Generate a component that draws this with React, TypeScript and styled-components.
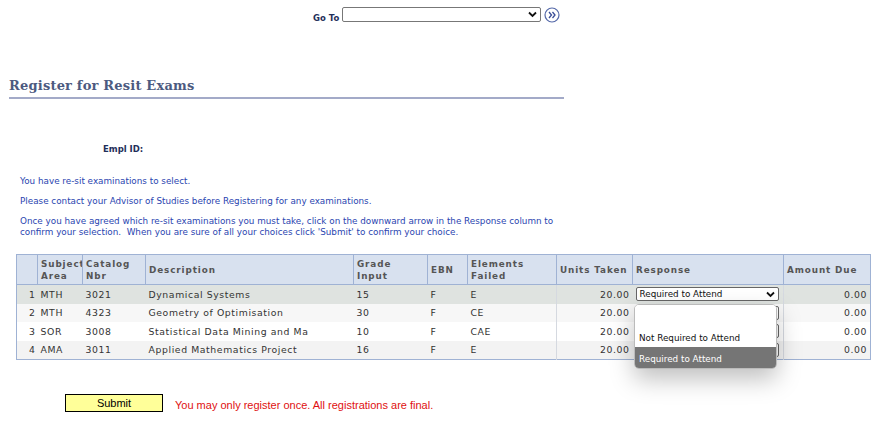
import React from "react";
import styled, { createGlobalStyle } from "styled-components";

const Global = createGlobalStyle`
  body { margin: 0; background: #fff; font-family: "DejaVu Sans", Verdana, sans-serif; }
`;

const Page = styled.div`
  position: relative;
  width: 894px;
  height: 422px;
  overflow: hidden;
`;

const TopBar = styled.div`
  display: flex;
  align-items: center;
  padding: 6px 0 0 313px;
  gap: 3px;
  height: 17px;
`;
const GoLabel = styled.span`
  font-size: 8.5px;
  font-weight: bold;
  color: #1f2f5a;
  margin-top: 6px;
`;
const GoSelect = styled.div`
  width: 194px;
  height: 13px;
  border: 1px solid #777;
  border-radius: 2px;
  display: flex;
  justify-content: flex-end;
  align-items: center;
  padding-right: 3px;
`;

const Title = styled.h1`
  margin: 55px 0 0 9px;
  width: 555px;
  font-family: "DejaVu Serif", "Liberation Serif", serif;
  font-size: 13px;
  font-weight: bold;
  color: #4c5a80;
  padding-bottom: 4px;
  border-bottom: 2px solid #a3aac8;
  letter-spacing: 0.2px;
`;

const Empl = styled.div`
  margin: 45px 0 0 103px;
  font-size: 8.5px;
  font-weight: bold;
  color: #1f2f5a;
`;

const Info = styled.p<{ top: number }>`
  margin: ${(p) => p.top}px 0 0 20px;
  font-size: 8.8px;
  line-height: 11px;
  color: #2a45b0;
`;

const Table = styled.table`
  margin: 16px 0 0 16px;
  width: 855px;
  table-layout: fixed;
  border-collapse: collapse;
  font-size: 9.3px;
  color: #333;
  border: 1px solid #9fb2d4;
`;
const Th = styled.th`
  background: #d8e1ef;
  border: 1px solid #9fb2d4;
  height: 29px;
  text-align: left;
  padding: 0 3px;
  font-weight: bold;
  font-size: 8.8px;
  color: #555;
  letter-spacing: 0.9px;
  line-height: 12px;
  vertical-align: middle;
  white-space: nowrap;
  overflow: hidden;
`;
const Tr = styled.tr<{ bg: string }>`
  background: ${(p) => p.bg};
`;
const Td = styled.td<{ right?: boolean }>`
  height: 18.5px;
  padding: 0 3px;
  text-align: ${(p) => (p.right ? "right" : "left")};
  border-left: ${(p) => (p.right ? "1px solid #d5d9e0" : "none")};
  letter-spacing: 0.6px;
  white-space: nowrap;
  overflow: hidden;
`;
const RowSelect = styled.div`
  width: 135px;
  height: 12px;
  border: 1px solid #666;
  border-radius: 2px;
  background: #fff;
  font-size: 8.8px;
  letter-spacing: 0;
  color: #111;
  display: flex;
  justify-content: space-between;
  align-items: center;
  padding: 0 3px;
`;

const Popup = styled.div`
  position: absolute;
  left: 634px;
  top: 304px;
  width: 141px;
  background: #fff;
  border: 1px solid #bbb;
  border-radius: 5px;
  box-shadow: 0 10px 24px rgba(0, 0, 0, 0.25);
  overflow: hidden;
  font-size: 8.8px;
`;
const Opt = styled.div<{ sel?: boolean; h: number }>`
  height: ${(p) => p.h}px;
  display: flex;
  align-items: flex-end;
  padding: 0 4px 4px;
  box-sizing: border-box;
  background: ${(p) => (p.sel ? "#757575" : "#fff")};
  color: ${(p) => (p.sel ? "#fff" : "#111")};
`;

const Footer = styled.div`
  display: flex;
  align-items: center;
  margin: 34px 0 0 65px;
  gap: 12px;
`;
const Submit = styled.button`
  width: 98px;
  height: 18px;
  background: #ffff99;
  border: 1px solid #000;
  font-family: "Liberation Sans", Arial, sans-serif;
  font-size: 11px;
  padding: 0;
`;
const Warn = styled.span`
  font-family: "Liberation Sans", Arial, sans-serif;
  font-size: 11px;
  color: #e01010;
  margin-top: 4px;
`;

const Chevron = () => (
  <svg width="9" height="7" viewBox="0 0 9 7">
    <path d="M1 1.5 L4.5 5 L8 1.5" stroke="#111" strokeWidth="1.8" fill="none" />
  </svg>
);

const rows = [
  ["1", "MTH", "3021", "Dynamical Systems", "15", "F", "E", "#dfe3e0"],
  ["2", "MTH", "4323", "Geometry of Optimisation", "30", "F", "CE", "#f7f7f7"],
  ["3", "SOR", "3008", "Statistical Data Mining and Ma", "10", "F", "CAE", "#ffffff"],
  ["4", "AMA", "3011", "Applied Mathematics Project", "16", "F", "E", "#f3f3f3"],
];

const widths = [21, 45, 63, 208, 74, 40, 89, 76, 151, 87];

export default function App() {
  return (
    <Page>
      <Global />
      <TopBar>
        <GoLabel>Go To</GoLabel>
        <GoSelect>
          <Chevron />
        </GoSelect>
        <svg width="16" height="16" viewBox="0 0 16 16">
          <circle cx="8" cy="8" r="7" fill="#fff" stroke="#5468a8" strokeWidth="1.2" />
          <path d="M5 5 L7.5 8 L5 11 M8.5 5 L11 8 L8.5 11" stroke="#3a4e98" strokeWidth="1.3" fill="none" />
        </svg>
      </TopBar>
      <Title>Register for Resit Exams</Title>
      <Empl>Empl ID:</Empl>
      <Info top={22}>You have re-sit examinations to select.</Info>
      <Info top={9}>Please contact your Advisor of Studies before Registering for any examinations.</Info>
      <Info top={9}>
        Once you have agreed which re-sit examinations you must take, click on the downward arrow in the Response column to
        <br />
        confirm your selection.&nbsp; When you are sure of all your choices click 'Submit' to confirm your choice.
      </Info>
      <Table>
        <colgroup>
          {widths.map((w, i) => (
            <col key={i} style={{ width: w }} />
          ))}
        </colgroup>
        <thead>
          <tr>
            <Th></Th>
            <Th>Subject<br />Area</Th>
            <Th>Catalog<br />Nbr</Th>
            <Th>Description</Th>
            <Th>Grade<br />Input</Th>
            <Th>EBN</Th>
            <Th>Elements<br />Failed</Th>
            <Th>Units Taken</Th>
            <Th>Response</Th>
            <Th>Amount Due</Th>
          </tr>
        </thead>
        <tbody>
          {rows.map((r, i) => (
            <Tr key={r[0]} bg={r[7]}>
              <Td style={{ textAlign: "right", paddingRight: 2 }}>{r[0]}</Td>
              <Td>{r[1]}</Td>
              <Td>{r[2]}</Td>
              <Td>{r[3]}</Td>
              <Td>{r[4]}</Td>
              <Td>{r[5]}</Td>
              <Td>{r[6]}</Td>
              <Td right>20.00</Td>
              <Td>
                <RowSelect>
                  {i === 0 ? <><span>Required to Attend</span><Chevron /></> : null}
                </RowSelect>
              </Td>
              <Td right>0.00</Td>
            </Tr>
          ))}
        </tbody>
      </Table>
      <Popup>
        <Opt h={17} />
        <Opt h={25}>Not Required to Attend</Opt>
        <Opt sel h={21}>Required to Attend</Opt>
      </Popup>
      <Footer>
        <Submit>Submit</Submit>
        <Warn>You may only register once. All registrations are final.</Warn>
      </Footer>
    </Page>
  );
}
